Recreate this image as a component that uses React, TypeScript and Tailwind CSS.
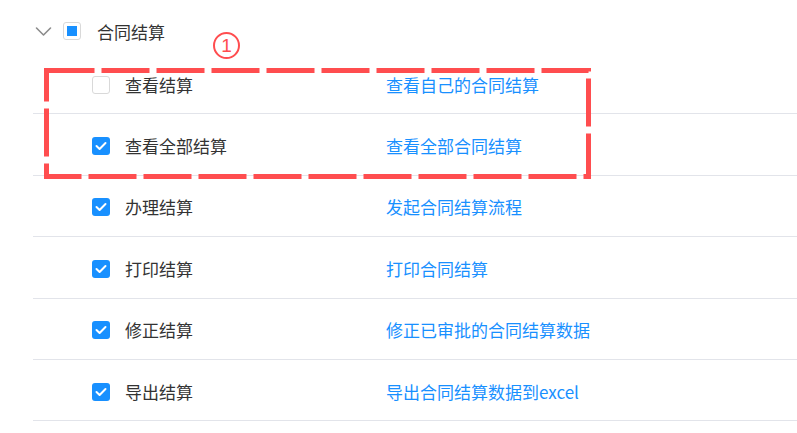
import React from 'react';

type Perm = {
  name: string;
  desc: string;
  checked: boolean;
};

const perms: Perm[] = [
  { name: '查看结算', desc: '查看自己的合同结算', checked: false },
  { name: '查看全部结算', desc: '查看全部合同结算', checked: true },
  { name: '办理结算', desc: '发起合同结算流程', checked: true },
  { name: '打印结算', desc: '打印合同结算', checked: true },
  { name: '修正结算', desc: '修正已审批的合同结算数据', checked: true },
  { name: '导出结算', desc: '导出合同结算数据到excel', checked: true },
];

const CheckBox = ({ checked }: { checked: boolean }) => {
  if (!checked) {
    return (
      <span className="block w-[18px] h-[18px] shrink-0 rounded-[3px] border border-[#d9d9d9] bg-white" />
    );
  }
  return (
    <span className="flex w-[18px] h-[18px] shrink-0 items-center justify-center rounded-[3px] bg-[#1890ff]">
      <svg width="12" height="10" viewBox="0 0 12 10" fill="none">
        <polyline
          points="1.5,5 4.6,8 10.5,2"
          stroke="#fff"
          strokeWidth="2"
          strokeLinecap="round"
          strokeLinejoin="round"
        />
      </svg>
    </span>
  );
};

const App = () => {
  return (
    <div
      className="relative w-[797px] h-[433px] overflow-hidden bg-white text-[17px] text-[#333]"
      style={{ fontFamily: '"Noto Sans CJK SC", "Noto Sans", sans-serif' }}
    >
      {/* group header */}
      <div className="flex h-[53px] items-start pt-[22px] pl-[35px]">
        <svg width="17" height="18" viewBox="0 0 17 18" fill="none" className="mr-[11px]">
          <polyline
            points="1.5,6 8.5,13 15.5,6"
            stroke="#8c8c8c"
            strokeWidth="1.6"
            strokeLinecap="round"
            strokeLinejoin="round"
          />
        </svg>
        <span className="flex w-[18px] h-[18px] items-center justify-center rounded-[3px] border border-[#d9d9d9] bg-white">
          <span className="block w-[10px] h-[10px] bg-[#1890ff]" />
        </span>
        <span className="ml-[16px] leading-[20px]">合同结算</span>
      </div>

      {/* permission rows */}
      <div className="ml-[33px]">
        {perms.map((p) => (
          <div
            key={p.name}
            className="flex h-[61.4px] items-center pt-[3px] border-b border-[#e2e4ea]"
          >
            <div className="ml-[59px] flex w-[294px] items-center gap-[15px]">
              <CheckBox checked={p.checked} />
              <span className="leading-[20px]">{p.name}</span>
            </div>
            <span className="leading-[20px] text-[#1890ff]">{p.desc}</span>
          </div>
        ))}
      </div>

      {/* annotation */}
      <div className="absolute left-[213px] top-[32px] flex w-[27px] h-[27px] items-center justify-center rounded-full border-2 border-[#ff4d4f] font-['Liberation_Sans',sans-serif] text-[19px] leading-none text-[#ff4d4f]">
        1
      </div>
      <svg
        className="absolute left-[44px] top-[68px]"
        width="547"
        height="111"
        viewBox="0 0 547 111"
        fill="none"
      >
        <rect
          x="2.5"
          y="2.5"
          width="542"
          height="106"
          stroke="#ff4d4f"
          strokeWidth="5"
          strokeDasharray="48 7"
        />
      </svg>
    </div>
  );
};

export default App;
